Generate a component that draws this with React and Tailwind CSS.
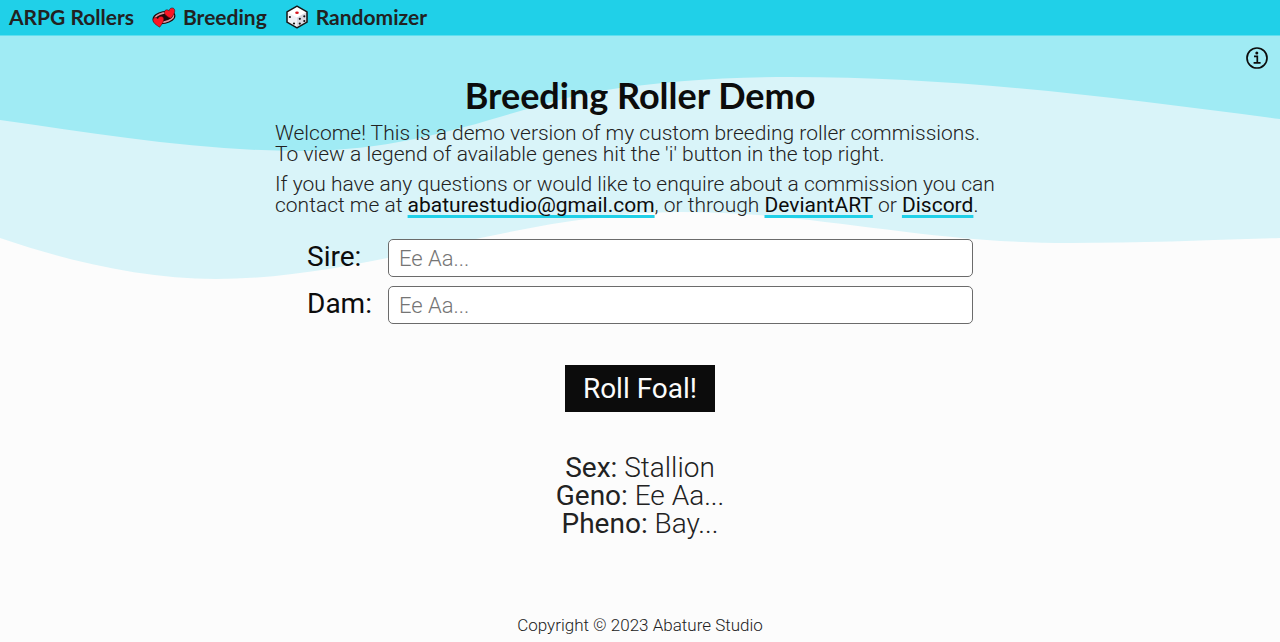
import { useState } from "react";

function HeartsIcon() {
  return (
    <svg viewBox="0 0 24 24" className="h-6 w-6" aria-hidden="true">
      <ellipse cx="12" cy="12.500" rx="9.800" ry="4.600" transform="rotate(-12 12 12.5)" fill="#20090c" stroke="#20090c" strokeWidth="3.600" />
      <ellipse cx="12" cy="12.500" rx="9.600" ry="4.400" transform="rotate(-12 12 12.5)" fill="none" stroke="#e0939d" strokeWidth="1.700" />
      <path
        d="M18.900 13.400C15.800 12.100 11.800 9.700 12.500 6.700C13 4.600 15.600 4.100 17.100 5.900C17.200 3.300 20.200 2.100 22 3.700C24.200 6.300 21.200 10.600 18.900 13.400Z"
        fill="#fb1524"
        stroke="#20090c"
        strokeWidth="0.500"
      />
      <path
        d="M7.700 22.200C4.500 20.200 0.500 17.700 1 14.500C1.400 12.400 4.200 11.900 5.900 13.800C6.400 11.400 9.400 10.500 11.200 12.200C13.300 14.600 10 19.100 7.700 22.200Z"
        fill="#fb1524"
        stroke="#20090c"
        strokeWidth="0.500"
      />
    </svg>
  );
}

function DiceIcon() {
  return (
    <svg viewBox="0 0 24 24" className="h-6 w-6" aria-hidden="true">
      <path d="M12 1.200L22 6.800V17.200L12 22.800L2 17.200V6.800Z" fill="#fff" />
      <path d="M12 12.500L22 6.800V17.200L12 22.800Z" fill="#d9d9e2" />
      <path d="M12 12.500L2 6.800V17.200L12 22.800Z" fill="#f0f0f5" />
      <path
        d="M12 1.200L22 6.800V17.200L12 22.800L2 17.200V6.800Z"
        fill="none"
        stroke="#151515"
        strokeWidth="1.500"
        strokeLinejoin="round"
      />
      <ellipse cx="12" cy="7.700" rx="1.800" ry="1.300" fill="#d8151f" />
      <g fill="#151515">
        <circle cx="4.900" cy="12" r="1.100" />
        <circle cx="9" cy="18.500" r="1.100" />
        <circle cx="19.300" cy="11.300" r="1.100" />
        <circle cx="14.800" cy="13.800" r="1.100" />
        <circle cx="19.300" cy="16" r="1.100" />
        <circle cx="14.800" cy="18.600" r="1.100" />
      </g>
    </svg>
  );
}

function InfoIcon() {
  return (
    <svg viewBox="0 0 22 22" className="h-[22px] w-[22px]" aria-hidden="true">
      <circle cx="11" cy="11" r="10" fill="none" stroke="#0c0c0c" strokeWidth="1.700" />
      <circle cx="10.800" cy="5.900" r="1.500" fill="#0c0c0c" />
      <path d="M8 9.300H11.300V15.900M7.600 15.900H14.600" fill="none" stroke="#0c0c0c" strokeWidth="1.700" />
    </svg>
  );
}

function Waves() {
  return (
    <svg
      viewBox="0 0 1280 250"
      preserveAspectRatio="none"
      className="absolute inset-x-0 top-0 -z-10 h-[250px] w-full"
      aria-hidden="true"
    >
      <path
        d="M0 0H1280V202C1210 204 1140 207 1070 207C920 207 820 176 680 176C520 176 370 243 216 243C145 243 70 226 0 202Z"
        fill="#d9f4f9"
      />
      <path
        d="M0 0H1280V83C1120 62 960 41 790 41C730 41 660 45 600 55C520 68 430 115 300 115C200 115 100 98 0 84Z"
        fill="#a0ebf4"
      />
    </svg>
  );
}

function ParentInput({ id, label, value, onChange }) {
  return (
    <div className="flex items-center">
      <label htmlFor={id} className="w-[81px] shrink-0 pb-0.5 text-[28px] leading-8 font-normal text-[#0c0c0c]">
        {label}
      </label>
      <input
        id={id}
        type="text"
        value={value}
        onChange={(e) => onChange(e.target.value)}
        placeholder="Ee Aa..."
        className="h-[38px] min-w-0 flex-1 rounded-[5px] border border-[#6b6b6b] bg-white px-2.5 text-[22px] font-light placeholder:text-[#757575]"
      />
    </div>
  );
}

const linkClass =
  "font-normal text-[#0c0c0c] underline decoration-[#20d0e8] decoration-3 underline-offset-3 [text-decoration-skip-ink:none]";

function App() {
  const [sire, setSire] = useState("");
  const [dam, setDam] = useState("");
  const [foal, setFoal] = useState({ sex: "Stallion", geno: "Ee Aa...", pheno: "Bay..." });

  const rollFoal = (e) => {
    e.preventDefault();
    setFoal({ ...foal, sex: Math.random() < 0.5 ? "Stallion" : "Mare" });
  };

  return (
    <div className="flex min-h-screen flex-col bg-[#fcfcfc] font-[Roboto,sans-serif] font-light text-[#222]">
      <nav className="flex h-9 items-center gap-[18px] border-b border-[#60dfef] bg-[#20d0e8] px-[9px] pb-0.5 font-[Lato,sans-serif] text-[21px] font-bold text-[#222]">
        <a href="#home">ARPG Rollers</a>
        <a href="#breeding" className="flex items-center gap-[7px]">
          <HeartsIcon />
          Breeding
        </a>
        <a href="#randomizer" className="flex items-center gap-[7px]">
          <DiceIcon />
          Randomizer
        </a>
      </nav>

      <div className="relative isolate flex flex-1 flex-col items-center">
        <Waves />
        <button type="button" aria-label="Gene legend" className="absolute top-[11px] right-3">
          <InfoIcon />
        </button>

        <main className="flex w-full max-w-[730px] flex-1 flex-col pt-[39px]">
          <h1 className="text-center font-[Lato,sans-serif] text-4xl leading-10 font-bold text-[#0c0c0c]">
            Breeding Roller Demo
          </h1>
          <div className="mt-2 flex flex-col gap-[9px] text-[21px] leading-[21px]">
            <p>
              Welcome! This is a demo version of my custom breeding roller commissions.
              <br />
              To view a legend of available genes hit the 'i' button in the top right.
            </p>
            <p>
              If you have any questions or would like to enquire about a commission you can contact me at{" "}
              <a href="mailto:abaturestudio@gmail.com" className={linkClass}>
                abaturestudio@gmail.com
              </a>
              , or through{" "}
              <a href="#deviantart" className={linkClass}>
                DeviantART
              </a>{" "}
              or{" "}
              <a href="#discord" className={linkClass}>
                Discord
              </a>
              .
            </p>
          </div>

          <form onSubmit={rollFoal} className="mt-[23px] flex flex-col gap-[9px] px-8">
            <ParentInput id="sire" label="Sire:" value={sire} onChange={setSire} />
            <ParentInput id="dam" label="Dam:" value={dam} onChange={setDam} />
            <button
              type="submit"
              className="mt-8 h-[47px] self-center bg-[#0c0c0c] px-[18px] text-[28px] font-normal text-[#fcfcfc]"
            >
              Roll Foal!
            </button>
          </form>

          <div className="mt-[42px] text-center text-[28px] leading-7">
            <p>
              <b className="font-normal">Sex:</b> {foal.sex}
            </p>
            <p>
              <b className="font-normal">Geno:</b> {foal.geno}
            </p>
            <p>
              <b className="font-normal">Pheno:</b> {foal.pheno}
            </p>
          </div>
        </main>

        <footer className="pb-[5px] text-[17px] leading-6">Copyright © 2023 Abature Studio</footer>
      </div>
    </div>
  );
}

export default App;
